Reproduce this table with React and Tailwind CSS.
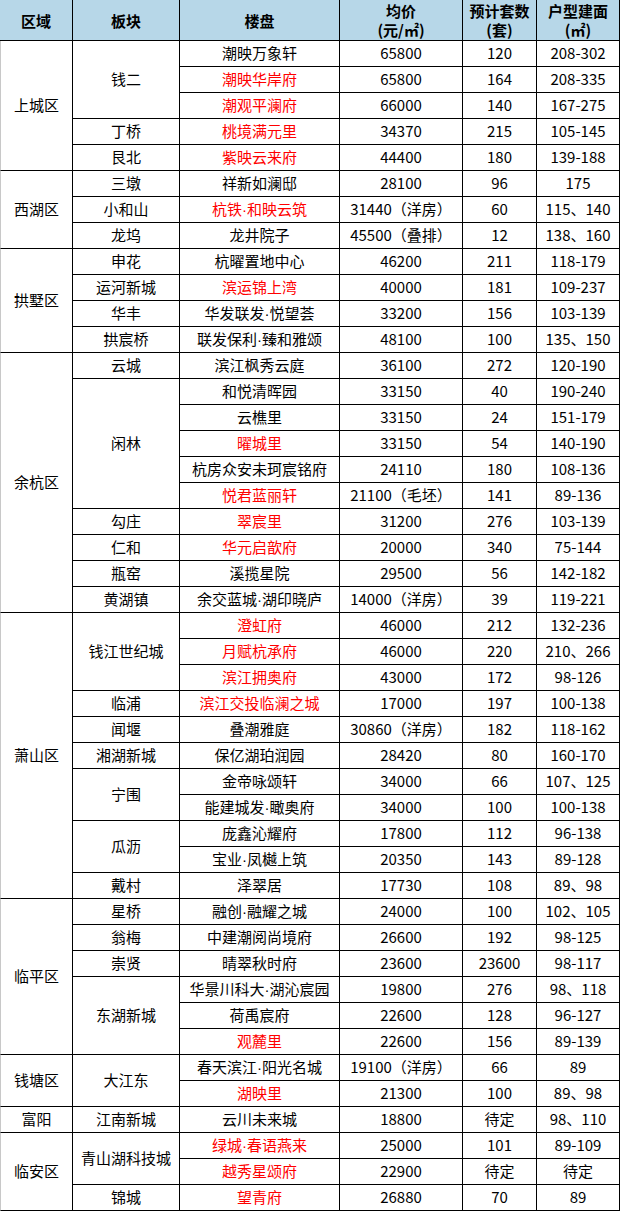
import React from "react";

const SPAN = {
    1: "row-span-1",
    2: "row-span-2",
    3: "row-span-3",
    4: "row-span-4",
    5: "row-span-5",
    6: "row-span-6",
    10: "row-span-10",
    11: "row-span-11",
};

// [楼盘, 均价, 套数, 建面, 红字]
const districts = [
    {
        region: "上城区",
        blocks: [
            { name: "钱二", items: [["潮映万象轩", "65800", "120", "208-302"], ["潮映华岸府", "65800", "164", "208-335", true], ["潮观平澜府", "66000", "140", "167-275", true]] },
            { name: "丁桥", items: [["桃境满元里", "34370", "215", "105-145", true]] },
            { name: "艮北", items: [["紫映云来府", "44400", "180", "139-188", true]] },
        ],
    },
    {
        region: "西湖区",
        blocks: [
            { name: "三墩", items: [["祥新如澜邸", "28100", "96", "175"]] },
            { name: "小和山", items: [["杭铁·和映云筑", "31440（洋房）", "60", "115、140", true]] },
            { name: "龙坞", items: [["龙井院子", "45500（叠排）", "12", "138、160"]] },
        ],
    },
    {
        region: "拱墅区",
        blocks: [
            { name: "申花", items: [["杭曜置地中心", "46200", "211", "118-179"]] },
            { name: "运河新城", items: [["滨运锦上湾", "40000", "181", "109-237", true]] },
            { name: "华丰", items: [["华发联发·悦望荟", "33200", "156", "103-139"]] },
            { name: "拱宸桥", items: [["联发保利·臻和雅颂", "48100", "100", "135、150"]] },
        ],
    },
    {
        region: "余杭区",
        blocks: [
            { name: "云城", items: [["滨江枫秀云庭", "36100", "272", "120-190"]] },
            {
                name: "闲林",
                items: [
                    ["和悦清晖园", "33150", "40", "190-240"],
                    ["云樵里", "33150", "24", "151-179"],
                    ["曜城里", "33150", "54", "140-190", true],
                    ["杭房众安未珂宸铭府", "24110", "180", "108-136"],
                    ["悦君蓝丽轩", "21100（毛坯）", "141", "89-136", true],
                ],
            },
            { name: "勾庄", items: [["翠宸里", "31200", "276", "103-139", true]] },
            { name: "仁和", items: [["华元启歆府", "20000", "340", "75-144", true]] },
            { name: "瓶窑", items: [["溪揽星院", "29500", "56", "142-182"]] },
            { name: "黄湖镇", items: [["余交蓝城·湖印晓庐", "14000（洋房）", "39", "119-221"]] },
        ],
    },
    {
        region: "萧山区",
        blocks: [
            { name: "钱江世纪城", items: [["澄虹府", "46000", "212", "132-236", true], ["月赋杭承府", "46000", "220", "210、266", true], ["滨江拥奥府", "43000", "172", "98-126", true]] },
            { name: "临浦", items: [["滨江交投临澜之城", "17000", "197", "100-138", true]] },
            { name: "闻堰", items: [["叠潮雅庭", "30860（洋房）", "182", "118-162"]] },
            { name: "湘湖新城", items: [["保亿湖珀润园", "28420", "80", "160-170"]] },
            { name: "宁围", items: [["金帝咏颂轩", "34000", "66", "107、125"], ["能建城发·瞰奥府", "34000", "100", "100-138"]] },
            { name: "瓜沥", items: [["庞鑫沁耀府", "17800", "112", "96-138"], ["宝业·凤樾上筑", "20350", "143", "89-128"]] },
            { name: "戴村", items: [["泽翠居", "17730", "108", "89、98"]] },
        ],
    },
    {
        region: "临平区",
        blocks: [
            { name: "星桥", items: [["融创·融耀之城", "24000", "100", "102、105"]] },
            { name: "翁梅", items: [["中建潮阅尚境府", "26600", "192", "98-125"]] },
            { name: "崇贤", items: [["晴翠秋时府", "23600", "23600", "98-117"]] },
            { name: "东湖新城", items: [["华景川科大·湖沁宸园", "19800", "276", "98、118"], ["荷禹宸府", "22600", "128", "96-127"], ["观麓里", "22600", "156", "89-139", true]] },
        ],
    },
    {
        region: "钱塘区",
        blocks: [{ name: "大江东", items: [["春天滨江·阳光名城", "19100（洋房）", "66", "89"], ["湖映里", "21300", "100", "89、98", true]] }],
    },
    {
        region: "富阳",
        blocks: [{ name: "江南新城", items: [["云川未来城", "18800", "待定", "98、110"]] }],
    },
    {
        region: "临安区",
        blocks: [
            { name: "青山湖科技城", items: [["绿城·春语燕来", "25000", "101", "89-109", true], ["越秀星颂府", "22900", "待定", "待定", true]] },
            { name: "锦城", items: [["望青府", "26880", "70", "89", true]] },
        ],
    },
];

const cell = "flex items-center justify-center text-center border-r border-b border-black whitespace-nowrap";

const Head = ({ col, children }) => (
    <div className={`${cell} ${col} bg-[#b7d7e8] font-bold flex-col leading-[19px]`}>{children}</div>
);

// the middle dot is narrow in the original, not a full-width CJK one
const Name = ({ text }) => {
    const parts = text.split("·");
    return parts.map((p, i) => (
        <React.Fragment key={i}>
            {i > 0 && <span className="font-['Liberation_Sans',sans-serif]">·</span>}
            {p}
        </React.Fragment>
    ));
};

export default function App() {
    const rows = [];

    districts.forEach((d) => {
        const total = d.blocks.reduce((n, b) => n + b.items.length, 0);
        d.blocks.forEach((b, bi) => {
            b.items.forEach((it, ii) => {
                const [name, price, count, area, red] = it;
                if (bi === 0 && ii === 0) {
                    rows.push(
                        <div key={d.region} className={`${cell} col-start-1 ${SPAN[total]} border-l border-l-[#c8c8c8]`}>
                            {d.region}
                        </div>
                    );
                }
                if (ii === 0) {
                    rows.push(
                        <div key={d.region + b.name} className={`${cell} col-start-2 ${SPAN[b.items.length]}`}>
                            {b.name}
                        </div>
                    );
                }
                rows.push(
                    <div key={name} className={`${cell} col-start-3 ${red ? "text-[#ff0000]" : ""}`}>
                        <span>
                            <Name text={name} />
                        </span>
                    </div>,
                    <div key={name + "p"} className={`${cell} col-start-4`}>{price}</div>,
                    <div key={name + "c"} className={`${cell} col-start-5`}>{count}</div>,
                    <div key={name + "a"} className={`${cell} col-start-6`}>{area}</div>
                );
            });
        });
    });

    return (
        <div className="w-[620px] bg-white text-black text-[15px] font-['Noto_Sans_CJK_SC','Microsoft_YaHei',sans-serif]">
            <div className="grid grid-cols-[73px_107px_160px_123px_74px_83px] grid-rows-[41px] auto-rows-[26px]">
                {/* header */}
                <Head col="col-start-1">区域</Head>
                <Head col="col-start-2">板块</Head>
                <Head col="col-start-3">楼盘</Head>
                <Head col="col-start-4">
                    <span>均价</span>
                    <span>(元/㎡)</span>
                </Head>
                <Head col="col-start-5">
                    <span>预计套数</span>
                    <span>(套)</span>
                </Head>
                <Head col="col-start-6">
                    <span>户型建面</span>
                    <span>(㎡)</span>
                </Head>
                {rows}
            </div>
        </div>
    );
}
